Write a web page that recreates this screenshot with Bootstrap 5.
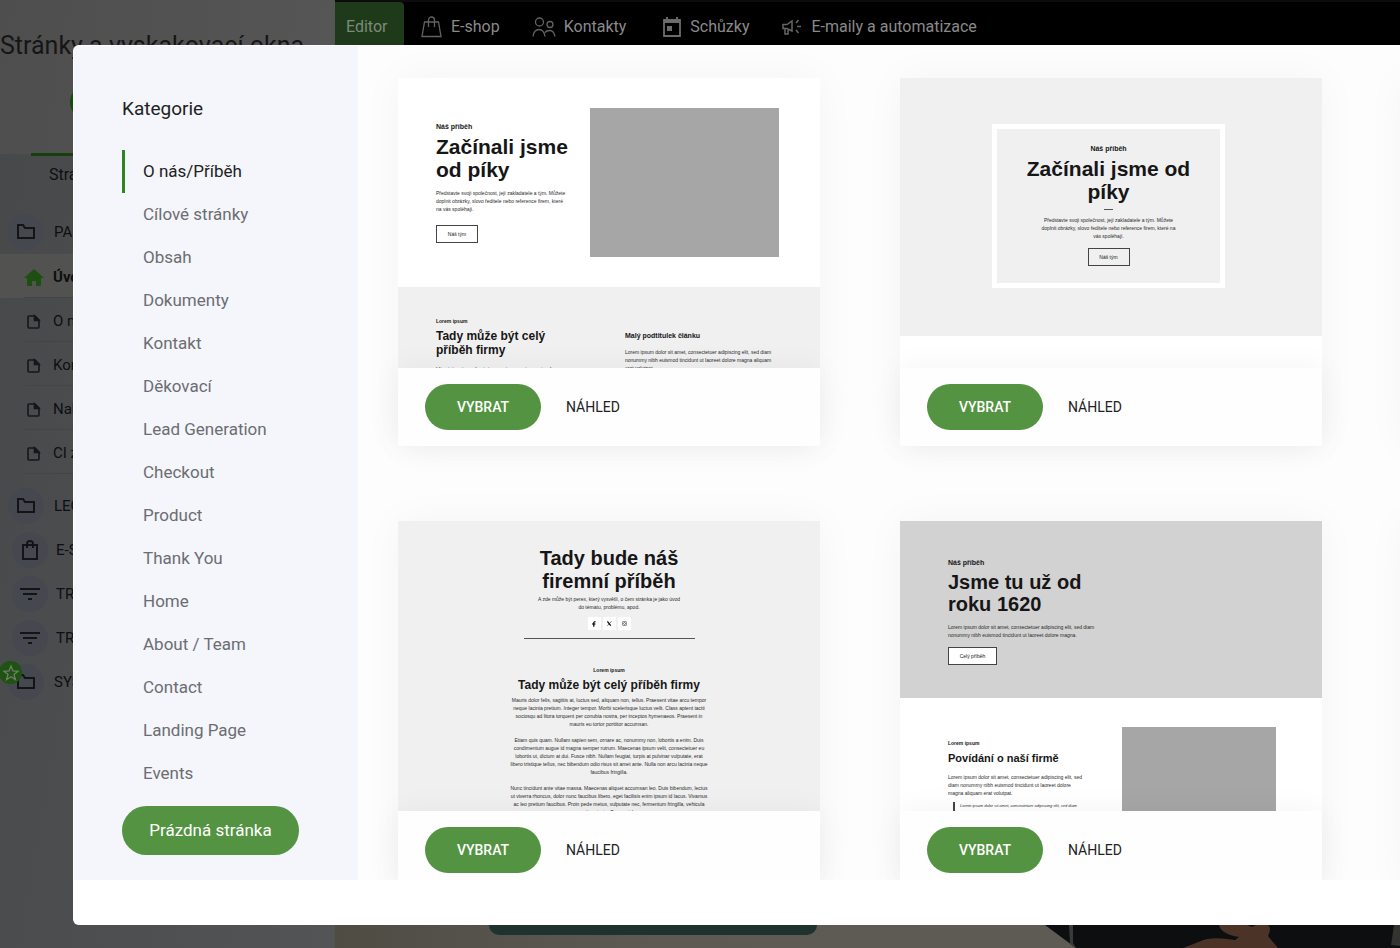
<!DOCTYPE html>
<html lang="cs">
<head>
<meta charset="utf-8">
<meta name="viewport" content="width=device-width, initial-scale=1">
<title>Stránky a vyskakovací okna</title>
<link href="https://cdn.jsdelivr.net/npm/bootstrap@5.3.0/dist/css/bootstrap.min.css" rel="stylesheet">
<style>
  :root { --green: #539341; }
  body { font-family: Roboto, "Liberation Sans", sans-serif; color: #222; background: #5b5852; }
  a { color: inherit; text-decoration: none; }
  svg { display: block; flex: none; }

  /* dimmed editor behind the dialog */
  .sidebar { flex: 0 0 335px; background: linear-gradient(100deg, #47484a, #535456); color: #0d0f12; }
  .sidebar-head { height: 154px; background: linear-gradient(100deg, #4e4e4e, #565656); }
  .sidebar-title { font-size: 25px; line-height: 30px; padding-top: 31px; color: #161616; }
  .add-page { width: 190px; height: 36px; margin: 23px 0 0 70px; background: #174a0c; }
  .side-tab { height: 57px; margin-left: 31px; border-top: 3px solid #153f0b; font-size: 16px; line-height: 20px; padding: 9px 0 0 18px; margin-top: -1px; }
  .tree-row { height: 44px; font-size: 15px; padding-left: 8px; }
  .disc { width: 36px; height: 36px; background: #45484f; margin-right: 10px; display: grid; place-items: center; }
  .tree-page { height: 44px; font-size: 15px; margin-left: 24px; padding-top: 4px; border-bottom: 1px solid #434548; }
  .tree-page svg { margin-right: 9px; }
  .tree-home { background: #525250; }
  .tree-groups { padding-top: 10px; }
  .star { left: -1px; top: 1px; width: 23px; height: 23px; background: #1f5213; display: grid; place-items: center; }
  .topbar { height: 46px; background: #000; color: #8a8a8a; font-size: 16px; border-top: 2px solid #0c0c0c; }
  .topbar a { height: 100%; padding-top: 6px; }
  .topbar .tab-active { width: 69px; padding-left: 11px; background: #1f3a1a; border-radius: 0 4px 0 0; color: #7d8a79; }
  .canvas-area { background: linear-gradient(90deg, #4f4c44, #5d5a54 30%, #5f5c56); }
  .cta { height: 10px; width: 328px; margin-left: 154px; background: #20322d; border-radius: 0 0 20px 20px; }

  /* dialog */
  .overlay { padding: 45px 0 23px 73px; }
  .sheet { background: #fff; border-radius: 6px 0 0 6px; border: 1px solid #fff; border-right: 0; }
  .cats { flex: 0 0 284px; background: #f4f6fc; padding: 48px 0 0 48px; }
  .cats h2 { font-size: 19px; line-height: 30px; font-weight: 400; margin-bottom: 26px; }
  .cats .nav-link { font-size: 17px; line-height: 43px; height: 43px; padding: 0 0 0 18px; color: #6c6d70; border-left: 3px solid transparent; }
  .cats .nav-link.active { color: #222; border-color: #2f8523; }
  .btn-green { background: var(--green); color: #fff; border-radius: 30px; border: 0; }
  .btn-blank { width: 177px; height: 49px; margin-top: 11px; font-size: 17px; }
  .gallery { padding: 32px 0 0 40px; background: #fdfdfd; }
  .tiles { grid-template-columns: repeat(3, calc((100% - 158px) / 2)); column-gap: 80px; row-gap: 75px; }
  .tile { height: 368px; background: #fff; box-shadow: 0 0 40px rgba(0,0,0,.04); }
  .preview { height: 290px; font-family: "Liberation Sans", Arial, sans-serif; color: #161616; white-space: nowrap; }
  .tile-foot { height: 78px; padding: 0 27px; gap: 25px; font-size: 14px; background: #fefefe; box-shadow: 0 0 30px rgba(0,0,0,.05); color: #222; }
  .tile-foot .btn-green { width: 116px; height: 46px; font-weight: 500; }
  .btn-plain { background: none; border: 0; padding: 0; color: #222; }
  .sheet-foot { flex: 0 0 44px; }

  /* page miniatures */
  .preview p { font-size: 5px; line-height: 8px; margin: 0; color: #2a2a2a; }
  .t-eyebrow { font-size: 7px; line-height: 8px; font-weight: 700; }
  .t-lorem { font-size: 5px; line-height: 8px; font-weight: 700; }
  .t-big { font-size: 21px; line-height: 23px; font-weight: 700; margin: 0; }
  .t-big.t-less { font-size: 20px; line-height: 22px; }
  .t-mid { font-size: 12px; line-height: 14px; font-weight: 700; margin: 0; }
  .t-mid.t-less { font-size: 11px; }
  .t-btn { display: inline-block; width: 42px; height: 18px; border: 1px solid #444; font-size: 5px; line-height: 16px; text-align: center; }
  .g1 { background: #f0f0f0; }
  .pic { background: #a6a6a6; }
  .p1-top { height: 209px; padding: 0 41px 0 38px; }
  .p1-top .pic { width: 189px; height: 149px; }
  .p1-top .t-btn { margin-top: 12px; }
  .p1-low { padding: 30px 0 0 38px; }
  .p1-low .left { width: 189px; }
  .p1-low .left p { font-size: 6px; }
  .p1-low .right { padding-top: 15px; }
  .p2 { height: 258px; padding: 0 5px 2px 0; }
  .p2-box { width: 233px; height: 164px; border: 5px solid #fff; padding-top: 16px; }
  .dash { width: 9px; height: 1px; background: #555; margin: 6px auto; }
  .p3 { padding-top: 26px; }
  .p3 .t-less { line-height: 23px; margin-bottom: 2px; }
  .socials { gap: 2px; margin-top: 6px; }
  .soc { width: 13px; height: 13px; background: #fff; display: grid; place-items: center; }
  .rule { width: 171px; height: 1px; background: #555; margin: 8px auto 27px; }
  .p4-top { height: 177px; background: #d2d2d2; padding: 38px 0 0 48px; }
  .p4-top .t-btn { width: 49px; background: #fff; }
  .p4-low { padding: 29px 46px 0 48px; }
  .p4-low .pic { width: 154px; height: 110px; }
  .preview .quote { font-size: 4px; border-left: 2px solid #444; margin: 5px 0 0 5px; padding-left: 5px; font-style: italic; }
</style>
</head>
<body>
<div class="d-flex vh-100 overflow-hidden">
  <aside class="sidebar overflow-hidden">
    <div class="sidebar-head">
      <div class="sidebar-title text-nowrap">Stránky a vyskakovací okna</div>
      <div class="add-page rounded-pill"></div>
    </div>
    <div class="side-tab">Stránky</div>
    <div class="tree-row d-flex align-items-center"><span class="disc rounded-circle"><svg width="20" height="18" viewBox="0 0 20 18" fill="none" stroke="#121417" stroke-width="2"><path d="M2 3V15H18V5H9L7 2H2Z"/></svg></span>PAGES</div>
    <div class="tree-home"><div class="tree-page d-flex align-items-center fw-bold"><svg width="20" height="18" viewBox="0 0 20 18" fill="#1d4f13"><path d="M10 0 0 9h3v7q0 1 1 1h4v-5h4v5h4q1 0 1-1V9h3z"/></svg>Úvod</div></div>
    <div class="tree-page d-flex align-items-center"><svg width="20" height="16" viewBox="0 0 20 16" fill="none" stroke="#15171a" stroke-width="1.600"><path d="M5 2q-1 0-1 1v10q0 1 1 1h9q1 0 1-1V6l-4-4Z"/><path d="M10.500 2v4.500H15Z" fill="#15171a"/></svg>O nás</div>
    <div class="tree-page d-flex align-items-center"><svg width="20" height="16" viewBox="0 0 20 16" fill="none" stroke="#15171a" stroke-width="1.600"><path d="M5 2q-1 0-1 1v10q0 1 1 1h9q1 0 1-1V6l-4-4Z"/><path d="M10.500 2v4.500H15Z" fill="#15171a"/></svg>Kontakt</div>
    <div class="tree-page d-flex align-items-center"><svg width="20" height="16" viewBox="0 0 20 16" fill="none" stroke="#15171a" stroke-width="1.600"><path d="M5 2q-1 0-1 1v10q0 1 1 1h9q1 0 1-1V6l-4-4Z"/><path d="M10.500 2v4.500H15Z" fill="#15171a"/></svg>Nabídka</div>
    <div class="tree-page d-flex align-items-center"><svg width="20" height="16" viewBox="0 0 20 16" fill="none" stroke="#15171a" stroke-width="1.600"><path d="M5 2q-1 0-1 1v10q0 1 1 1h9q1 0 1-1V6l-4-4Z"/><path d="M10.500 2v4.500H15Z" fill="#15171a"/></svg>CI zkouška</div>
    <div class="tree-groups">
      <div class="tree-row d-flex align-items-center"><span class="disc rounded-circle"><svg width="20" height="18" viewBox="0 0 20 18" fill="none" stroke="#121417" stroke-width="2"><path d="M2 3V15H18V5H9L7 2H2Z"/></svg></span>LEGAL</div>
      <div class="tree-row d-flex align-items-center"><span class="disc rounded-circle ms-1 me-2"><svg width="18" height="20" viewBox="0 0 18 20" fill="none" stroke="#121417" stroke-width="2"><path d="M2 5H16V19H2ZM6 8V4a3 3 0 0 1 6 0V8"/></svg></span>E-SHOP</div>
      <div class="tree-row d-flex align-items-center"><span class="disc rounded-circle ms-1 me-2"><svg width="20" height="14" viewBox="0 0 20 14" stroke="#121417" stroke-width="2"><path d="M0 2H20M3 7H17M8 12H12"/></svg></span>TRYCHTÝŘ</div>
      <div class="tree-row d-flex align-items-center"><span class="disc rounded-circle ms-1 me-2"><svg width="20" height="14" viewBox="0 0 20 14" stroke="#121417" stroke-width="2"><path d="M0 2H20M3 7H17M8 12H12"/></svg></span>TRYCHTÝŘ</div>
      <div class="tree-row d-flex align-items-center position-relative"><span class="disc rounded-circle"><svg width="20" height="18" viewBox="0 0 20 18" fill="none" stroke="#121417" stroke-width="2"><path d="M2 3V15H18V5H9L7 2H2Z"/></svg></span>SYSTÉM
        <span class="star position-absolute rounded-circle"><svg width="18" height="18" viewBox="0 0 18 18" fill="none" stroke="#6f7f6b" stroke-width="1.300"><path d="m9 2 2 5 5 .3-4 3.300 1.400 5L9 12.800 4.600 15.600 6 10.600 2 7.300 7 7Z"/></svg></span>
      </div>
    </div>
  </aside>
  <div class="flex-grow-1 d-flex flex-column">
    <nav class="topbar d-flex align-items-center" aria-label="Hlavní">
      <a href="#" class="tab-active d-flex align-items-center">Editor</a>
      <a href="#" class="d-flex align-items-center ms-3"><svg class="me-2" width="23" height="24" viewBox="0 0 23 24" fill="none" stroke="#626262" stroke-width="1.300"><path d="M4.500 7H18.500L21 21.500H2ZM8.500 12V5a3 3 0 0 1 6 0v7"/></svg>E-shop</a>
      <a href="#" class="d-flex align-items-center ms-4 ps-2"><svg class="me-2" width="24" height="24" viewBox="0 0 24 24" fill="none" stroke="#626262" stroke-width="1.300"><circle cx="7.500" cy="7" r="4"/><circle cx="18" cy="9.500" r="3"/><path d="M1 21.500q1-7 6-7t6 7M13 17.500q1.500-2 4.500-2 4.500 0 5.500 6"/></svg>Kontakty</a>
      <a href="#" class="d-flex align-items-center ms-4 ps-2"><svg class="me-2 ms-1" width="20" height="24" viewBox="0 0 20 24" fill="none" stroke="#6c6c6c" stroke-width="1.800"><path d="M2 5H18V21H2Z"/><path d="M2 6H18" stroke-width="4"/><path d="M5 2V5M15 2V5"/><path d="M5 11h5v5H5Z" fill="#6c6c6c" stroke="none"/></svg>Schůzky</a>
      <a href="#" class="d-flex align-items-center ms-4 ps-2"><svg class="me-2" width="22" height="20" viewBox="0 0 22 20" fill="none" stroke="#666" stroke-width="1.500"><path d="M2 7.500H6L11 4V14L6 11.500H2ZM4 12V17H7V12M15 6l2.500-3M16 9.500h4M15 13l2.500 3"/></svg>E-maily a automatizace</a>
    </nav>
    <main class="canvas-area flex-grow-1 d-flex flex-column justify-content-end overflow-hidden">
      <div class="d-flex justify-content-between align-items-start">
        <div class="cta"></div>
        <svg width="355" height="23" viewBox="0 0 355 23"><path d="M0 0H355V23H31Z" fill="#0c0e0f"/><path d="M24 0h4v18l3 5-6-4z" fill="#393b39"/><path d="M349 0h6v21l-9-1z" fill="#33342f"/><path d="M174 0q2 9 20 12l-4 3q-24-4-34 1l-18 7h95l-10-12q4-8 0-11h-12l-4 2-5-2z" fill="#4b3328"/></svg>
      </div>
    </main>
  </div>
</div>

<div class="overlay position-fixed top-0 start-0 w-100 h-100">
  <div class="sheet h-100 d-flex flex-column overflow-hidden" role="dialog" aria-label="Kategorie">
    <div class="d-flex flex-grow-1 overflow-hidden">
      <nav class="cats" aria-label="Kategorie">
        <h2>Kategorie</h2>
        <div class="nav flex-column">
          <a class="nav-link active" href="#">O nás/Příběh</a>
          <a class="nav-link" href="#">Cílové stránky</a>
          <a class="nav-link" href="#">Obsah</a>
          <a class="nav-link" href="#">Dokumenty</a>
          <a class="nav-link" href="#">Kontakt</a>
          <a class="nav-link" href="#">Děkovací</a>
          <a class="nav-link" href="#">Lead Generation</a>
          <a class="nav-link" href="#">Checkout</a>
          <a class="nav-link" href="#">Product</a>
          <a class="nav-link" href="#">Thank You</a>
          <a class="nav-link" href="#">Home</a>
          <a class="nav-link" href="#">About / Team</a>
          <a class="nav-link" href="#">Contact</a>
          <a class="nav-link" href="#">Landing Page</a>
          <a class="nav-link" href="#">Events</a>
        </div>
        <button type="button" class="btn-green btn-blank">Prázdná stránka</button>
      </nav>
      <section class="gallery flex-grow-1 overflow-hidden">
        <div class="tiles d-grid">
          <article class="tile">
            <div class="preview overflow-hidden">
              <div class="p1-top d-flex justify-content-between align-items-center">
                <div>
                  <div class="t-eyebrow mb-1">Náš příběh</div>
                  <h3 class="t-big mb-2">Začínali jsme<br>od píky</h3>
                  <p>Představte svoji společnost, její zakladatele a tým. Můžete<br>doplnit obrázky, slovo ředitele nebo reference firem, které<br>na vás spoléhají.</p>
                  <a href="#" class="t-btn">Náš tým</a>
                </div>
                <div class="pic"></div>
              </div>
              <div class="g1 p1-low d-flex h-100">
                <div class="left">
                  <div class="t-lorem mb-1">Lorem ipsum</div>
                  <h3 class="t-mid mb-2">Tady může být celý<br>příběh firmy</h3>
                  <p>Ut wisi enim ad minim veniam, quis nostrud</p>
                </div>
                <div class="right">
                  <div class="t-eyebrow mb-2">Malý podtitulek článku</div>
                  <p>Lorem ipsum dolor sit amet, consectetuer adipiscing elit, sed diam<br>nonummy nibh euismod tincidunt ut laoreet dolore magna aliquam<br>erat volutpat.</p>
                </div>
              </div>
            </div>
            <div class="tile-foot position-relative d-flex align-items-center"><button type="button" class="btn-green">VYBRAT</button><button type="button" class="btn-plain">NÁHLED</button></div>
          </article>

          <article class="tile">
            <div class="preview overflow-hidden">
              <div class="g1 p2 d-flex align-items-center justify-content-center">
                <div class="p2-box text-center">
                  <div class="t-eyebrow mb-1">Náš příběh</div>
                  <h3 class="t-big">Začínali jsme od<br>píky</h3>
                  <div class="dash"></div>
                  <p>Představte svoji společnost, její zakladatele a tým. Můžete<br>doplnit obrázky, slovo ředitele nebo reference firem, které na<br>vás spoléhají.</p>
                  <a href="#" class="t-btn mt-2">Náš tým</a>
                </div>
              </div>
            </div>
            <div class="tile-foot position-relative d-flex align-items-center"><button type="button" class="btn-green">VYBRAT</button><button type="button" class="btn-plain">NÁHLED</button></div>
          </article>
          <div class="tile"></div>

          <article class="tile">
            <div class="preview g1 p3 text-center overflow-hidden">
              <h3 class="t-big t-less">Tady bude náš<br>firemní příběh</h3>
              <p>A zde může být perex, který vysvětlí, o čem stránka je jako úvod<br>do tématu, problému, apod.</p>
              <div class="socials d-flex justify-content-center">
                <span class="soc"><svg width="4" height="6" viewBox="0 0 5 7"><path d="M1.500 7V4H0V2.800h1.500V2Q1.500 0 3.300 0H4.500v1.200H3.700Q3 1.200 3 2v.8h1.400L4.200 4H3v3z"/></svg></span>
                <span class="soc"><svg width="5" height="5" viewBox="0 0 6 6" fill="none" stroke="#111"><path d="M.5.500 4.500 5.500" stroke-width="1.500"/><path d="M5.500.300.500 5.700" stroke-width=".7"/></svg></span>
                <span class="soc"><svg width="5" height="5" viewBox="0 0 6 6" fill="none" stroke="#444" stroke-width=".8"><rect x=".5" y=".5" width="5" height="5" rx="1.300"/><circle cx="3" cy="3" r="1.200"/></svg></span>
              </div>
              <div class="rule"></div>
              <div class="t-lorem">Lorem ipsum</div>
              <h3 class="t-mid my-1">Tady může být celý příběh firmy</h3>
              <p>Mauris dolor felis, sagittis at, luctus sed, aliquam non, tellus. Praesent vitae arcu tempor<br>neque lacinia pretium. Integer tempor. Morbi scelerisque luctus velit. Class aptent taciti<br>sociosqu ad litora torquent per conubia nostra, per inceptos hymenaeos. Praesent in<br>mauris eu tortor porttitor accumsan.</p>
              <p class="mt-2">Etiam quis quam. Nullam sapien sem, ornare ac, nonummy non, lobortis a enim. Duis<br>condimentum augue id magna semper rutrum. Maecenas ipsum velit, consectetuer eu<br>lobortis ut, dictum at dui. Fusce nibh. Nullam feugiat, turpis at pulvinar vulputate, erat<br>libero tristique tellus, nec bibendum odio risus sit amet ante. Nulla non arcu lacinia neque<br>faucibus fringilla.</p>
              <p class="mt-2">Nunc tincidunt ante vitae massa. Maecenas aliquet accumsan leo. Duis bibendum, lectus<br>ut viverra rhoncus, dolor nunc faucibus libero, eget facilisis enim ipsum id lacus. Vivamus<br>ac leo pretium faucibus. Proin pede metus, vulputate nec, fermentum fringilla, vehicula<br>vitae, justo. Fusce nisl.</p>
            </div>
            <div class="tile-foot position-relative d-flex align-items-center"><button type="button" class="btn-green">VYBRAT</button><button type="button" class="btn-plain">NÁHLED</button></div>
          </article>

          <article class="tile">
            <div class="preview overflow-hidden">
              <div class="p4-top">
                <div class="t-eyebrow mb-1">Náš příběh</div>
                <h3 class="t-big t-less mb-2">Jsme tu už od<br>roku 1620</h3>
                <p>Lorem ipsum dolor sit amet, consectetuer adipiscing elit, sed diam<br>nonummy nibh euismod tincidunt ut laoreet dolore magna.</p>
                <a href="#" class="t-btn mt-2">Celý příběh</a>
              </div>
              <div class="p4-low d-flex justify-content-between">
                <div class="pt-2 mt-1">
                  <div class="t-lorem mb-1">Lorem ipsum</div>
                  <h3 class="t-mid t-less mb-2">Povídání o naší firmě</h3>
                  <p>Lorem ipsum dolor sit amet, consectetuer adipiscing elit, sed<br>diam nonummy nibh euismod tincidunt ut laoreet dolore<br>magna aliquam erat volutpat.</p>
                  <p class="quote">Lorem ipsum dolor sit amet, consectetuer adipiscing elit, sed diam<br>nonummy nibh euismod tincidunt ut laoreet dolore magna aliquam</p>
                </div>
                <div class="pic"></div>
              </div>
            </div>
            <div class="tile-foot position-relative d-flex align-items-center"><button type="button" class="btn-green">VYBRAT</button><button type="button" class="btn-plain">NÁHLED</button></div>
          </article>
          <div class="tile"></div>
        </div>
      </section>
    </div>
    <div class="sheet-foot"></div>
  </div>
</div>
<script src="https://cdn.jsdelivr.net/npm/bootstrap@5.3.0/dist/js/bootstrap.bundle.min.js"></script>
</body>
</html>
